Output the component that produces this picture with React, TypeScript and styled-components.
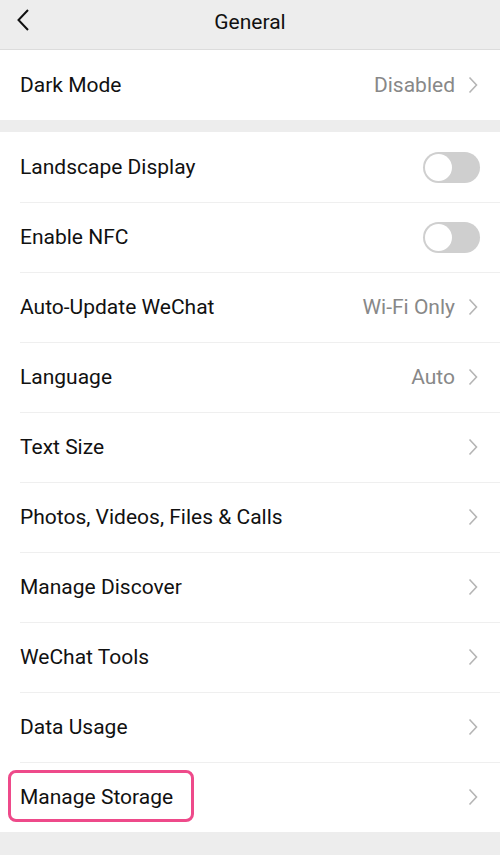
import React from 'react';
import styled, { createGlobalStyle } from 'styled-components';

const GlobalStyle = createGlobalStyle`
  body {
    margin: 0;
    background: #ededed;
    font-family: Roboto, "Noto Sans", sans-serif;
    color: #111;
  }
`;

const Page = styled.div`
  width: 500px;
  height: 855px;
  background: #ededed;
  overflow: hidden;
`;

const Header = styled.div`
  height: 49px;
  display: flex;
  align-items: center;
  justify-content: center;
  position: relative;
  border-bottom: 1px solid #dcdcdc;
  font-size: 21px;
  padding-bottom: 6px;
  box-sizing: content-box;
  height: 43px;
`;

const Back = styled.div`
  position: absolute;
  left: 15px;
  top: 8px;
  display: flex;
`;

const Group = styled.div<{ $gap?: boolean }>`
  background: #fff;
  margin-top: ${(p) => (p.$gap ? '12px' : '0')};
`;

const Row = styled.div`
  height: 70px;
  display: flex;
  align-items: center;
  padding: 0 22px 0 20px;
  position: relative;
  font-size: 21px;

  & + &::before {
    content: '';
    position: absolute;
    left: 20px;
    right: 0;
    top: 0;
    height: 1px;
    background: #efefef;
  }
`;

const Label = styled.span<{ $marked?: boolean }>`
  flex: 1;
  position: relative;
  ${(p) =>
    p.$marked &&
    `
    &::after {
      content: '';
      position: absolute;
      left: -12px;
      top: -15px;
      width: 180px;
      height: 46px;
      border: 3px solid #ee4a8a;
      border-radius: 8px;
    }
  `}
`;

const Value = styled.span`
  color: #888;
  margin-right: 13px;
`;

const Toggle = styled.div`
  width: 57px;
  height: 31px;
  border-radius: 16px;
  background: #cfcfcf;
  position: relative;
  margin-right: -2px;

  &::after {
    content: '';
    position: absolute;
    left: 2px;
    top: 2px;
    width: 27px;
    height: 27px;
    border-radius: 50%;
    background: #fff;
  }
`;

const Chevron = () => (
  <svg width="10" height="18" viewBox="0 0 10 18">
    <path d="M1.5 1.5 L8.5 9 L1.5 16.5" fill="none" stroke="#b5b5b5" strokeWidth="1.6" />
  </svg>
);

type Item = { label: string; value?: string; toggle?: boolean; marked?: boolean };

const items: Item[] = [
  { label: 'Landscape Display', toggle: true },
  { label: 'Enable NFC', toggle: true },
  { label: 'Auto-Update WeChat', value: 'Wi-Fi Only' },
  { label: 'Language', value: 'Auto' },
  { label: 'Text Size' },
  { label: 'Photos, Videos, Files & Calls' },
  { label: 'Manage Discover' },
  { label: 'WeChat Tools' },
  { label: 'Data Usage' },
  { label: 'Manage Storage', marked: true },
];

const App = () => (
  <Page>
    <GlobalStyle />
    <Header>
      <Back>
        <svg width="16" height="24" viewBox="0 0 16 24">
          <path d="M13 2 L3.5 12 L13 22" fill="none" stroke="#111" strokeWidth="2" />
        </svg>
      </Back>
      General
    </Header>
    <Group>
      <Row>
        <Label>Dark Mode</Label>
        <Value>Disabled</Value>
        <Chevron />
      </Row>
    </Group>
    <Group $gap>
      {items.map((it) => (
        <Row key={it.label}>
          <Label $marked={it.marked}>{it.label}</Label>
          {it.toggle ? (
            <Toggle />
          ) : (
            <>
              {it.value && <Value>{it.value}</Value>}
              <Chevron />
            </>
          )}
        </Row>
      ))}
    </Group>
  </Page>
);

export default App;
